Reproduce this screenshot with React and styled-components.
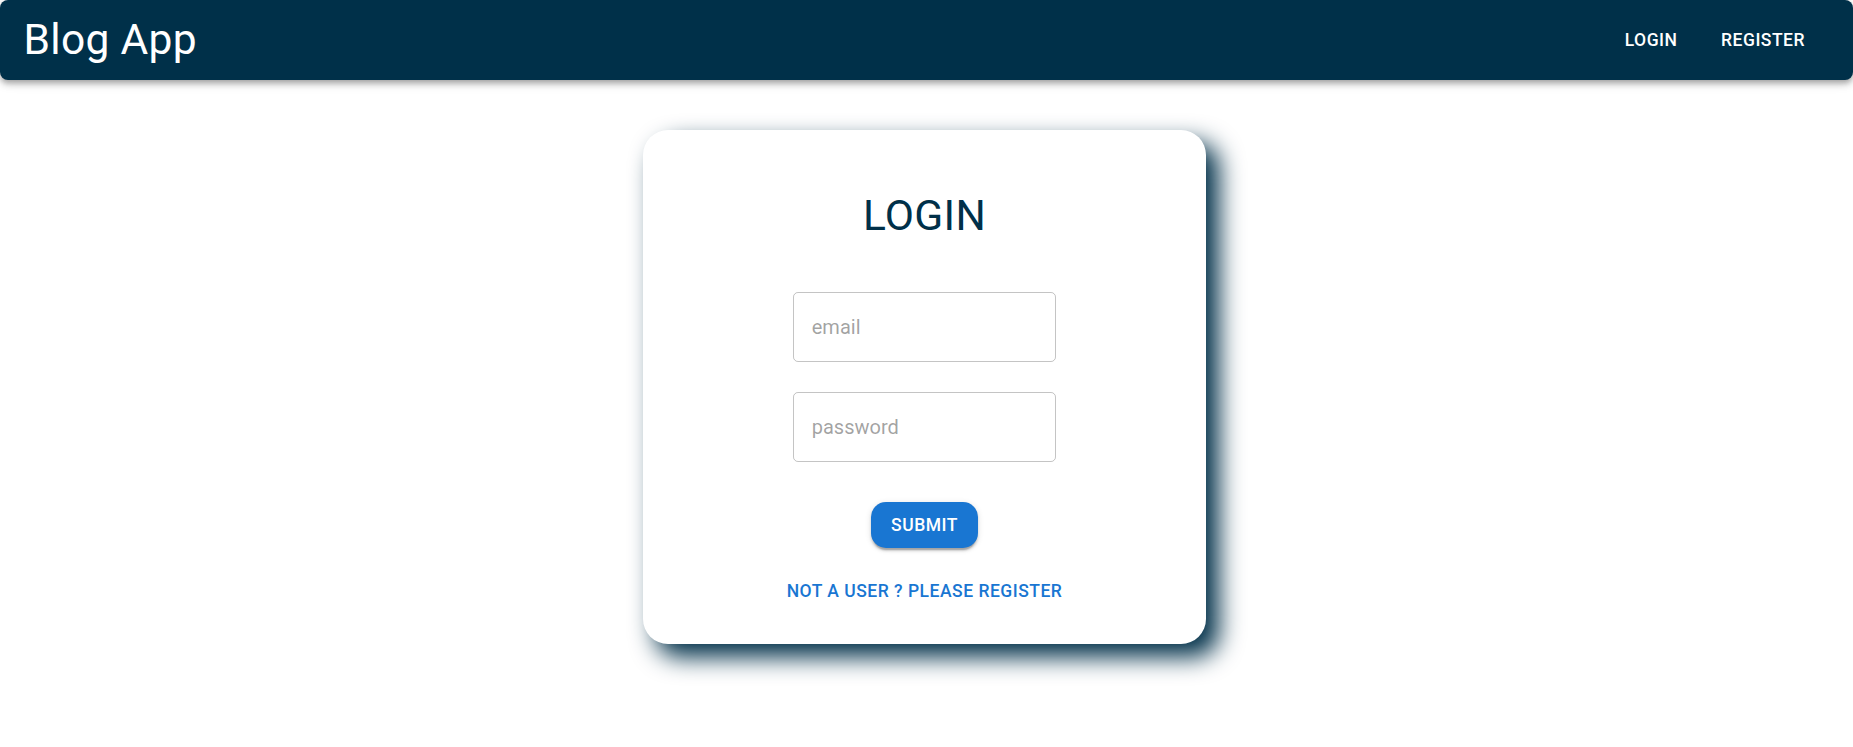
import React from "react";
import styled, { createGlobalStyle } from "styled-components";

const GlobalStyle = createGlobalStyle`
  * { box-sizing: border-box; }
  html, body { margin: 0; padding: 0; background: #ffffff; min-height: 100%; }
  body {
    min-height: 100vh;
    font-family: "Roboto", "Helvetica", "Arial", sans-serif;
    -webkit-font-smoothing: antialiased;
  }
`;

const NAVY = "#003049";
const BLUE = "#1976d2";

const Page = styled.div`
  min-height: 100vh;
  display: flex;
  flex-direction: column;
`;

const AppBar = styled.header`
  display: flex;
  align-items: center;
  height: 80px;
  padding: 0 28px 0 23.5px;
  background: ${NAVY};
  color: #ffffff;
  border-radius: 8px;
  box-shadow: 0px 2.5px 5px -1.25px rgba(0, 0, 0, 0.2),
    0px 5px 6.25px 0px rgba(0, 0, 0, 0.14),
    0px 1.25px 12.5px 0px rgba(0, 0, 0, 0.12);
`;

const Brand = styled.h1`
  margin: 0;
  font-size: 42.5px;
  font-weight: 400;
  line-height: 1.235;
  letter-spacing: 0.00735em;
`;

const NavActions = styled.nav`
  margin-left: auto;
  display: flex;
  align-items: center;
`;

const BaseButton = styled.button`
  font-family: "Roboto", "Helvetica", "Arial", sans-serif;
  font-size: 17.5px;
  font-weight: 500;
  line-height: 1.75;
  letter-spacing: 0.02857em;
  text-transform: uppercase;
  border: 0;
  cursor: pointer;
  min-width: 80px;
  display: inline-flex;
  align-items: center;
  justify-content: center;
`;

const NavButton = styled(BaseButton)`
  background: transparent;
  color: #ffffff;
  padding: 7.5px 10px;
  margin: 0 10px;
  border-radius: 5px;
`;

const Main = styled.main`
  display: flex;
  justify-content: center;
  padding: 0 4px 80px 0;
`;

const Card = styled.form`
  width: 562.5px;
  margin-top: 50px;
  padding: 30px;
  display: flex;
  flex-direction: column;
  align-items: center;
  background: #ffffff;
  border-radius: 25px;
  box-shadow: 12.5px 12.5px 25px ${NAVY};
`;

const Title = styled.h2`
  margin: 0;
  padding: 30px;
  text-align: center;
  color: ${NAVY};
  font-size: 42.5px;
  font-weight: 400;
  line-height: 1.235;
  letter-spacing: 0.00735em;
`;

const Input = styled.input`
  display: block;
  width: 262.5px;
  height: 70px;
  margin: 20px 0 10px;
  padding: 0 17.5px;
  font-family: "Roboto", "Helvetica", "Arial", sans-serif;
  font-size: 20px;
  color: rgba(0, 0, 0, 0.87);
  border: 1px solid rgba(0, 0, 0, 0.23);
  border-radius: 5px;
  outline: none;
  background: transparent;
  &::placeholder {
    color: rgba(0, 0, 0, 0.87);
    opacity: 0.42;
  }
`;

const SubmitButton = styled(BaseButton)`
  margin-top: 30px;
  padding: 7.5px 20px;
  background: ${BLUE};
  color: #ffffff;
  border-radius: 15px;
  box-shadow: 0px 3.75px 1.25px -2.5px rgba(0, 0, 0, 0.2),
    0px 2.5px 2.5px 0px rgba(0, 0, 0, 0.14),
    0px 1.25px 6.25px 0px rgba(0, 0, 0, 0.12);
`;

const LinkButton = styled(BaseButton)`
  margin-top: 20px;
  padding: 7.5px 10px;
  background: transparent;
  color: ${BLUE};
  border-radius: 5px;
`;

export default function App() {
  return (
    <Page>
      <GlobalStyle />
      <AppBar>
        <Brand>Blog App</Brand>
        <NavActions>
          <NavButton type="button">Login</NavButton>
          <NavButton type="button">Register</NavButton>
        </NavActions>
      </AppBar>
      <Main>
        <Card onSubmit={(e) => e.preventDefault()}>
          <Title>LOGIN</Title>
          <Input type="email" name="email" placeholder="email" />
          <Input type="password" name="password" placeholder="password" />
          <SubmitButton type="submit">Submit</SubmitButton>
          <LinkButton type="button">Not a user ? Please Register</LinkButton>
        </Card>
      </Main>
    </Page>
  );
}
